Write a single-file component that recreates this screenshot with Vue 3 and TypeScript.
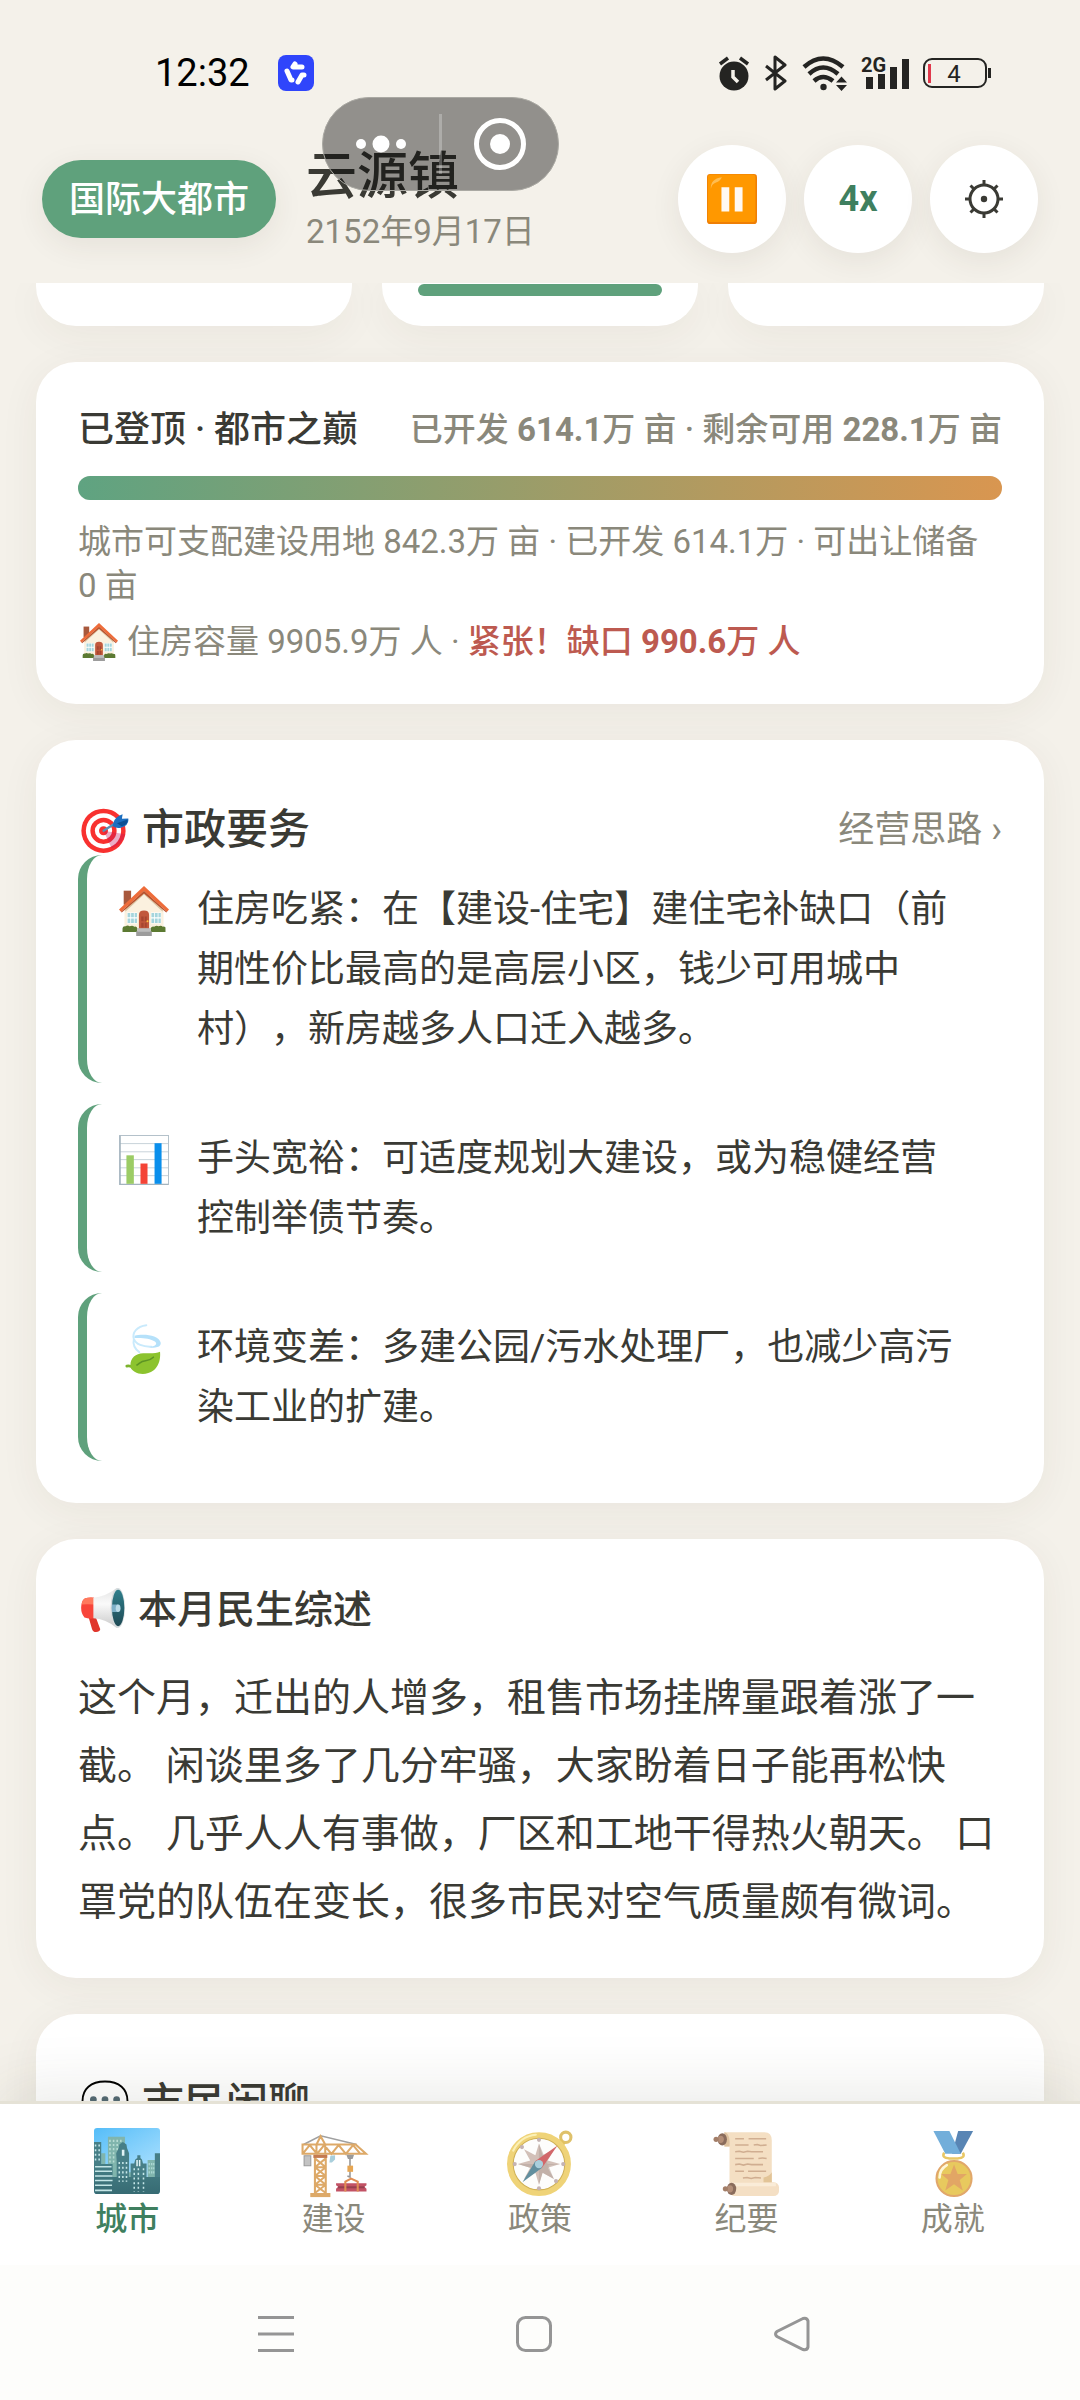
<script setup lang="ts">
import { ref } from 'vue'

interface Advice {
  icon: string
  text: string
}

interface Tab {
  id: string
  label: string
}

const advice: Advice[] = [
  { icon: 'house', text: '住房吃紧：在【建设-住宅】建住宅补缺口（前期性价比最高的是高层小区，钱少可用城中村），新房越多人口迁入越多。' },
  { icon: 'chart', text: '手头宽裕：可适度规划大建设，或为稳健经营控制举债节奏。' },
  { icon: 'leaf', text: '环境变差：多建公园/污水处理厂，也减少高污染工业的扩建。' },
]

const tabs: Tab[] = [
  { id: 'city', label: '城市' },
  { id: 'crane', label: '建设' },
  { id: 'compass', label: '政策' },
  { id: 'scroll', label: '纪要' },
  { id: 'medal', label: '成就' },
]

const activeTab = ref('city')
const developed = ref(100)
</script>

<template>
  <div class="page">
    <svg class="sprite" width="0" height="0" aria-hidden="true">
      <defs>
        <linearGradient id="sky" x1="0" y1="0" x2="0.6" y2="1">
          <stop offset="0" stop-color="#55bdf8" /><stop offset="1" stop-color="#b5e4ff" />
        </linearGradient>
        <linearGradient id="ground" x1="0" y1="0" x2="0" y2="1">
          <stop offset="0" stop-color="#457f86" /><stop offset="1" stop-color="#376b73" />
        </linearGradient>
        <linearGradient id="horn" x1="0" y1="0" x2="0" y2="1">
          <stop offset="0" stop-color="#2f7f8c" /><stop offset="1" stop-color="#1f4a55" />
        </linearGradient>
        <linearGradient id="cone" x1="0" y1="0" x2="0" y2="1">
          <stop offset="0" stop-color="#e4e4e4" /><stop offset="0.4" stop-color="#fafafa" /><stop offset="1" stop-color="#c9c9c9" />
        </linearGradient>
      </defs>

      <symbol id="house" viewBox="0 0 128 128">
        <path d="M12 12h19v36H12z" fill="#a8583c" />
        <path d="M64 10L14 58v52h100V58z" fill="#fbf1df" />
        <path d="M64 12L16 58v8l48-44 48 44v-8z" fill="#d9c4a4" />
        <path d="M64 0L0 60l5 6L64 13l59 53 5-6z" fill="#ee6c3a" />
        <path d="M5 66L64 13l59 53-2 2-57-49L7 68z" fill="#b9502c" />
        <path d="M21 68h26v28H21zM82 68h26v28H82z" fill="#fff" />
        <path d="M22 69h7v11h-7zM31 69h7v11h-7zM40 69h6v11h-6zM22 83h7v12h-7zM31 83h7v12h-7zM40 83h6v12h-6zM83 69h7v11h-7zM92 69h7v11h-7zM101 69h6v11h-6zM83 83h7v12h-7zM92 83h7v12h-7zM101 83h6v12h-6z" fill="#a5d5dc" />
        <path d="M51 110V74q0-11 13-11t13 11v36z" fill="#c1583c" />
        <path d="M57 78h6v12h-6zM66 78h5v12h-5zM57 94h6v12h-6zM66 94h5v12h-5z" fill="#a64530" />
        <circle cx="73" cy="90" r="2.500" fill="#ffc83c" />
        <path d="M9 118v-9q0-7 8-6 5-4 10 0 8-3 12 1 6-2 8 4v10zM81 118v-10q3-6 9-4 6-4 11-1 7-3 11 1 8-1 7 6v8z" fill="#5c7a32" />
        <path d="M47 108h34v8H47z" fill="#bdbdbd" /><path d="M44 116h40v12H44z" fill="#9c9c9c" />
      </symbol>

      <symbol id="chart" viewBox="0 0 128 128">
        <path d="M1 1h126v126H1z" fill="#fff" stroke="#b4c1ca" stroke-width="3" />
        <path d="M1 22h126M1 43h126M1 63h126M1 84h126M1 104h126" stroke="#b9c6cf" stroke-width="2" />
        <path d="M3 2v124h123" fill="none" stroke="#9fb0bb" stroke-width="3" />
        <path d="M19 52h19v73H19z" fill="#9ccc65" />
        <path d="M55 73h18v52H55z" fill="#f44336" />
        <path d="M91 21h18v104H91z" fill="#0a8fec" />
      </symbol>

      <symbol id="leaf" viewBox="0 0 128 128">
        <path d="M70 3C46 6 33 22 38 38c5 14 24 21 45 20M38 38c-3 14 3 26 14 34" fill="none" stroke="#c9eafc" stroke-width="5" stroke-linecap="round" />
        <path d="M40 30c12-4 36-4 50 2 20 8 22 24 8 27-8 3-16 2-20 0 14-1 22-8 14-14-12-8-32-10-52-9z" fill="#b5e1fa" />
        <path d="M20 108q8-2 16 4" fill="none" stroke="#7cb32c" stroke-width="7" stroke-linecap="round" />
        <path d="M30 112C26 90 40 76 62 75c20 0 34 1 43-4 2 20-4 38-17 48-14 10-34 12-48 3-5-3-9-6-10-10z" fill="#8cc32e" />
        <path d="M46 105c8-5 10-10 22-11 10-1 16-5 20-9" fill="none" stroke="#5d9424" stroke-width="4" stroke-linecap="round" />
      </symbol>

      <symbol id="target" viewBox="0 0 128 128">
        <circle cx="60" cy="66" r="59" fill="#f8312f" />
        <circle cx="60" cy="66" r="47" fill="#fff" />
        <circle cx="60" cy="66" r="35" fill="#f8312f" />
        <circle cx="60" cy="66" r="23" fill="#fff" />
        <circle cx="60" cy="66" r="12" fill="#f8312f" />
        <path d="M60 66l22 47q28-10 36-38z" fill="#c2185b" opacity="0.350" />
        <path d="M60 66L101 40" stroke="#5a8fb5" stroke-width="6" stroke-linecap="round" />
        <path d="M86 46q4-18 25-24l-2 12 17-1q3 18-18 24-13 4-24-4z" fill="#1c6fc0" />
        <path d="M96 46L124 36q2 14-16 18z" fill="#0d4f94" />
      </symbol>

      <symbol id="horn-speaker" viewBox="0 0 128 128">
        <path d="M22 84l20-2 14 38q-2 8-12 8-10 0-12-9z" fill="#e0352b" />
        <path d="M12 30q12-4 26-2v60q-14 3-28-2Q-2 72 1 50q2-16 11-20z" fill="#f8453a" />
        <path d="M12 30q12-4 26-2v20q-20-2-36 0 2-14 10-18z" fill="#ff7a5e" />
        <path d="M36 28Q70 26 104 0v116Q72 90 36 88z" fill="url(#cone)" />
        <ellipse cx="107" cy="58" rx="21" ry="58" fill="#d5dbdd" />
        <ellipse cx="108" cy="58" rx="18" ry="53" fill="url(#horn)" />
        <path d="M90 48h18v22H90q-2-11 0-22z" fill="#7db0c8" />
        <ellipse cx="108" cy="59" rx="7" ry="11" fill="#b9dbe8" />
      </symbol>

      <symbol id="pause" viewBox="0 0 128 128">
        <rect width="128" height="128" rx="8" fill="#ef7f05" />
        <rect x="2" y="1" width="122" height="122" rx="8" fill="#ff9800" />
        <path d="M10 38Q8 12 38 8q-4 10-15 14Q12 26 10 38z" fill="#ffbd52" />
        <path d="M37 34h20v62H37zM71 34h20v62H71z" fill="#fff9f2" />
      </symbol>

      <symbol id="bubble" viewBox="0 0 128 128">
        <path d="M64 4C26 4 4 24 4 56s22 48 52 48c2 10-8 18-16 20 26 0 40-10 46-21 24-5 38-22 38-47C124 24 102 4 64 4z" fill="#fff" stroke="#000" stroke-width="5" />
        <circle cx="33" cy="52" r="9" fill="#546a74" /><circle cx="64" cy="52" r="9" fill="#546a74" /><circle cx="95" cy="52" r="9" fill="#546a74" />
      </symbol>

      <symbol id="city" viewBox="0 0 128 128">
        <rect width="128" height="128" rx="6" fill="url(#sky)" />
        <path d="M27 17h33v80H27zM14 49h8v24h-8zM66 86h8v20h-8zM104 62h15v40h-15z" fill="#80b5ad" />
        <path d="M31 23v44M38 23v44M45 23v24M52 23v20" stroke="#b7dcd3" stroke-width="3" stroke-dasharray="4 4" />
        <path d="M107 68v24M112 68v24M116 68v24" stroke="#b9e3df" stroke-width="2" stroke-dasharray="4 4" />
        <path d="M0 27h14v50H0zM118 49h10v60h-10zM44 106V64l-1-15 5-10 1-7 7-5 7 5 1 7 4 10v57zM71 110V69h7l2-8 4-3v-5h6v5l3 3 2 8h7v41z" fill="#477f87" />
        <path d="M0 70h36v25h92v27q0 6-6 6H6q-6 0-6-6z" fill="url(#ground)" />
        <path d="M2 75h32M2 84h33M2 93h34M2 102h34M2 111h33M2 121h33" stroke="#c4e5e6" stroke-width="3" />
        <path d="M3 32v36M10 32v36" stroke="#c6e7ea" stroke-width="3" stroke-dasharray="4 5" />
        <path d="M49 66v38M56 66v38M63 66v38M78 78v46M86 78v46M96 78v46" stroke="#c6e7e8" stroke-width="3" stroke-dasharray="4 5" />
        <path d="M54 42h5v12h-5zM82 62h3v12h-3zM87 62h3v12h-3z" fill="#e1f3f5" />
      </symbol>

      <symbol id="crane" viewBox="0 -12 128 128" overflow="visible">
        <path d="M5 20L38 3l70 17" fill="none" stroke="#a0a0a0" stroke-width="3" />
        <path d="M6 42h13v19H6z" fill="#c3c3c3" stroke="#999" stroke-width="2" />
        <path d="M57 42l9-1v8l-6 6h-5z" fill="#a9cfdc" />
        <path d="M30 40V20L38 4l9 16v20M3 20h103l20 18H3zM3 38l14-17 14 17 14-17 14 17 14-17 14 17 14-17 14 17" fill="none" stroke="#dda968" stroke-width="4" />
        <path d="M27 40v75M48 40v75M27 47l21 17M48 47L27 64M27 64l21 17M48 64L27 81M27 81l21 17M48 81L27 98M27 98l21 16M48 98l-21 16M27 64h21M27 81h21M27 98h21" fill="none" stroke="#dda968" stroke-width="4" />
        <path d="M24 40h27v6H24z" fill="#c47a50" /><path d="M18 114h39v8H18z" fill="#dda968" />
        <path d="M88 40h15l-3 8h-9z" fill="#9b9b9b" /><path d="M95 46v37l-5-2" fill="none" stroke="#969696" stroke-width="3" />
        <path d="M90 61h11v12H90z" fill="#e6a653" />
        <path d="M68 95h59v4l-4 3 4 4v5H68v-5l4-4-4-3z" fill="#c25265" />
        <path d="M72 103h51" stroke="#96404f" stroke-width="4" />
        <path d="M86 111V92l11-6 13 6v19" fill="none" stroke="#e08d53" stroke-width="4" />
      </symbol>

      <symbol id="compass" viewBox="0 -4 128 128" overflow="visible">
        <circle cx="114" cy="14" r="10" fill="none" stroke="#dfc16b" stroke-width="6" />
        <path d="M96 22l8-5 9 9-5 8z" fill="#e2c25e" />
        <circle cx="62" cy="66" r="56" fill="#fdfdfc" stroke="#efd378" stroke-width="12" />
        <circle cx="62" cy="66" r="50" fill="none" stroke="#cfb055" stroke-width="2" />
        <path d="M12 40Q26 12 56 9" fill="none" stroke="#fbf0b5" stroke-width="4" stroke-linecap="round" />
        <path d="M62 26l7 23 22-12-12 22 24 7-24 7 12 22-22-12-7 23-7-23-22 12 12-22-24-7 24-7-12-22 22 12z" fill="#d2c0b8" />
        <path d="M62 26v80l7-23 22 12zM103 66H21l24 7z" fill="#b7a69e" opacity="0.600" />
        <path d="M98 30L68 73 55 60z" fill="#d2676a" /><path d="M30 101l25-41 13 13z" fill="#628f9e" />
        <circle cx="62" cy="66" r="8" fill="#a9cfdc" />
        <g fill="#c4b3b3"><circle cx="62" cy="19" r="4" /><circle cx="62" cy="113" r="4" /><circle cx="15" cy="66" r="4" /><circle cx="109" cy="66" r="4" /><circle cx="29" cy="33" r="4" /><circle cx="95" cy="99" r="4" /></g>
      </symbol>

      <symbol id="scroll" viewBox="0 -6 128 128" overflow="visible">
        <path d="M22 2h78q14 0 14 16v84H32V30H22z" fill="#f4dfc3" />
        <path d="M22 2q12 2 10 28H22z" fill="#dec19e" />
        <rect x="32" y="99" width="96" height="27" rx="10" fill="#f4dfc4" /><path d="M34 100h88v7H34z" fill="#faecd8" />
        <path d="M114 80q-4 8-16 10v9h16z" fill="#e2c497" />
        <ellipse cx="18" cy="16" rx="9" ry="12" fill="#8a6c5c" /><ellipse cx="15" cy="16" rx="6" ry="7" fill="#b38e78" /><circle cx="6" cy="16" r="5" fill="#a37e68" />
        <ellipse cx="36" cy="112" rx="9" ry="12" fill="#8a6c5c" /><ellipse cx="33" cy="112" rx="6" ry="7" fill="#b38e78" /><circle cx="24" cy="112" r="5" fill="#a37e68" />
        <path d="M43 15h17M69 15h34M43 27h26M79 27l7-1 6 2 12-1M43 40l8-1 8 2 8-2 8 1h22M43 53h36M88 53l8-1 8 1M43 65l8-1 8 2 8-2 8 1h22M43 78h17M68 78h35M58 91l8-1 8 2 8-2 11 1" fill="none" stroke="#d0ae91" stroke-width="3" />
      </symbol>

      <symbol id="medal" viewBox="0 -4 128 128" overflow="visible">
        <path d="M74 2h29L79 46H62z" fill="#5985b4" />
        <path d="M26 2h31l22 44H49z" fill="#72aeda" />
        <path d="M47 44q-6 10 10 11h16q16-1 10-11" fill="none" stroke="#e8c765" stroke-width="5" />
        <circle cx="66" cy="94" r="34" fill="#e8c95e" stroke="#e1a76b" stroke-width="4" />
        <path d="M66 67l7 18h18L77 97l6 20-17-12-17 12 6-20-14-12h18z" fill="#e2a665" />
        <path d="M38 92q0-16 14-24" fill="none" stroke="#fff6d8" stroke-width="5" stroke-linecap="round" />
      </symbol>
    </svg>

    <div class="statusbar">
      <div class="clock">
        <time>12:32</time>
        <svg class="app-badge" viewBox="0 0 36 36" aria-hidden="true">
          <rect width="36" height="36" rx="8" fill="#2f45fb" />
          <path d="M17 9l-2 3h9M9 16l4 9h1M26 20l-2 0-4 7" fill="none" stroke="#fff" stroke-width="5" stroke-linecap="round" stroke-linejoin="round" />
        </svg>
      </div>
      <div class="signals">
        <svg width="32" height="36" viewBox="0 0 32 36" aria-label="闹钟">
          <circle cx="16" cy="21" r="14.500" fill="#242422" />
          <path d="M2 9l8-6M30 9l-8-6" stroke="#242422" stroke-width="3.500" />
          <path d="M15 15v7l5 5" fill="none" stroke="#f4f1ea" stroke-width="3.500" />
        </svg>
        <svg width="24" height="36" viewBox="0 0 24 36" aria-label="蓝牙">
          <path d="M2 11l19 15-10 8V2l10 8L2 25" fill="none" stroke="#242422" stroke-width="3" stroke-linejoin="round" />
        </svg>
        <svg width="46" height="36" viewBox="0 0 46 36" aria-label="无线网络">
          <path d="M2 12q19-17 39 0M7 19q14-13 29 0M12 26q9-8 19 0" fill="none" stroke="#242422" stroke-width="4.500" />
          <circle cx="21.500" cy="32" r="3.200" fill="#242422" />
          <path d="M34 27.500l5.500-6 5.500 6zM34 30h11l-5.500 6z" fill="#242422" />
        </svg>
        <svg class="cell" width="47" height="36" viewBox="0 0 47 36" aria-label="信号">
          <text x="-1" y="17" class="net">2G</text>
          <path d="M4 22h7v12H4zM16 19h7v15h-7zM28 12h7v22h-7zM40 4h7v30h-7z" fill="#242422" />
        </svg>
        <svg width="68" height="36" viewBox="0 0 68 36" aria-label="电量">
          <rect x="1" y="4" width="62" height="28" rx="8" fill="none" stroke="#242422" stroke-width="2" />
          <path d="M5 9h3v19H5z" fill="#e0394c" /><path d="M65 13h3v10h-3z" fill="#242422" />
          <text x="31" y="27" text-anchor="middle" class="level">4</text>
        </svg>
      </div>
    </div>

    <header class="header">
      <span class="rank">国际大都市</span>
      <div class="place">
        <h1>云源镇</h1>
        <p>2152年9月17日</p>
      </div>
      <div class="controls">
        <button type="button" aria-label="暂停"><svg class="glyph-50"><use href="#pause" /></svg></button>
        <button type="button" class="speed">4x</button>
        <button type="button" aria-label="设置">
          <svg width="38" height="38" viewBox="0 0 38 38" fill="none" stroke="#3a3a34" stroke-width="3">
            <circle cx="19" cy="19" r="14" /><circle cx="19" cy="19" r="3.200" fill="#3a3a34" stroke="none" />
            <path d="M19 0v6M19 32v6M0 19h6M32 19h6M5.500 5.500l4 4M28.500 28.500l4 4M32.500 5.500l-4 4M9.500 28.500l-4 4" />
          </svg>
        </button>
      </div>
    </header>

    <div class="capsule">
      <button type="button" aria-label="更多">
        <svg width="52" height="20" viewBox="0 0 52 20" fill="#fff"><circle cx="6" cy="10" r="5" /><circle cx="26" cy="10" r="8.500" /><circle cx="46" cy="10" r="5" /></svg>
      </button>
      <i class="divider"></i>
      <button type="button" aria-label="关闭">
        <svg width="52" height="52" viewBox="0 0 52 52"><circle cx="26" cy="26" r="23.500" fill="none" stroke="#fff" stroke-width="5" /><circle cx="26" cy="26" r="10" fill="#fff" /></svg>
      </button>
    </div>

    <main class="content">
      <div class="stats">
        <div class="stat"></div>
        <div class="stat"><div class="stat-bar"></div></div>
        <div class="stat"></div>
      </div>

      <section class="card land">
        <div class="land-head">
          <h2>已登顶 · 都市之巅</h2>
          <strong>已开发 <em>614.1</em>万 亩 · 剩余可用 <em>228.1</em>万 亩</strong>
        </div>
        <div class="track"><div class="fill" :style="{ width: developed + '%' }"></div></div>
        <p class="note">城市可支配建设用地 842.3万 亩 · 已开发 614.1万 · 可出让储备 0 亩</p>
        <p class="note housing">
          <svg class="glyph-38"><use href="#house" /></svg>
          <span>住房容量 9905.9万 人 · <b>紧张！缺口 <em>990.6</em>万 人</b></span>
        </p>
      </section>

      <section class="card">
        <div class="section-head">
          <h2><svg class="glyph-48"><use href="#target" /></svg>市政要务</h2>
          <a href="#strategy">经营思路 ›</a>
        </div>
        <ul class="advice">
          <li v-for="item in advice" :key="item.icon">
            <svg class="glyph-50"><use :href="'#' + item.icon" /></svg>
            <p>{{ item.text }}</p>
          </li>
        </ul>
      </section>

      <section class="card report">
        <h2><svg class="glyph-44"><use href="#horn-speaker" /></svg>本月民生综述</h2>
        <p>这个月，迁出的人增多，租售市场挂牌量跟着涨了一截。 闲谈里多了几分牢骚，大家盼着日子能再松快点。 几乎人人有事做，厂区和工地干得热火朝天。 口罩党的队伍在变长，很多市民对空气质量颇有微词。</p>
      </section>

      <section class="card">
        <div class="section-head">
          <h2><svg class="glyph-48"><use href="#bubble" /></svg>市民闲聊</h2>
        </div>
      </section>
    </main>

    <nav class="tabs">
      <button
        v-for="tab in tabs"
        :key="tab.id"
        type="button"
        :class="{ active: tab.id === activeTab }"
        @click="activeTab = tab.id"
      >
        <svg class="glyph-66"><use :href="'#' + tab.id" /></svg>
        <span>{{ tab.label }}</span>
      </button>
    </nav>

    <div class="system-nav">
      <button type="button" aria-label="最近任务"><svg width="36" height="36" viewBox="0 0 36 36"><path d="M0 1.500h36M0 18h36M0 34.500h36" /></svg></button>
      <button type="button" aria-label="主屏幕"><svg width="36" height="36" viewBox="0 0 36 36"><rect x="1.500" y="1.500" width="33" height="33" rx="8" /></svg></button>
      <button type="button" aria-label="返回"><svg width="36" height="36" viewBox="0 0 36 36"><path d="M29 2.500L3 15.500q-3 2.500 0 5L29 33.500q4 1 5-2.500V5q-1-3.500-5-2.500z" /></svg></button>
    </div>
  </div>
</template>

<style>
body {
  margin: 0;
  background: #f4f1ea;
}
</style>

<style scoped>
.page {
  position: relative;
  display: flex;
  flex-direction: column;
  height: 100vh;
  overflow: hidden;
  background: #f4f1ea;
  color: #3a3a34;
  font-family: Roboto, "Noto Sans CJK SC", sans-serif;
  text-spacing-trim: space-all;
}
.sprite {
  position: absolute;
}
h1, h2, p, ul {
  margin: 0;
  padding: 0;
  font-weight: 500;
}
p {
  font-weight: 400;
}
em {
  font-style: normal;
  font-weight: 700;
}
button {
  display: flex;
  align-items: center;
  justify-content: center;
  border: 0;
  padding: 0;
  background: none;
  color: inherit;
  font: inherit;
}
svg {
  flex: none;
}
.glyph-38 { width: 38px; height: 38px; }
.glyph-44 { width: 44px; height: 44px; }
.glyph-48 { width: 48px; height: 48px; }
.glyph-50 { width: 50px; height: 50px; }
.glyph-66 { width: 66px; height: 66px; overflow: visible; }

.statusbar {
  display: flex;
  flex: none;
  align-items: center;
  justify-content: space-between;
  height: 145px;
  padding: 0 89px 0 155px;
}
.clock {
  display: flex;
  align-items: center;
  gap: 28px;
  color: #000;
  font-size: 38px;
}
.app-badge {
  width: 36px;
  height: 36px;
}
.signals {
  display: flex;
  align-items: center;
  gap: 14px;
}
.cell {
  overflow: visible;
}
.net {
  font-size: 20px;
  font-weight: 700;
  fill: #242422;
}
.level {
  font-size: 24px;
  fill: #242422;
}

.header {
  display: flex;
  flex: none;
  align-items: center;
  padding: 0 42px 30px;
}
.rank {
  padding: 2px 27px 0;
  border-radius: 39px;
  background: #5fa17c;
  box-shadow: 0 8px 30px rgba(60, 55, 40, 0.08);
  color: #fff;
  font-size: 36px;
  font-weight: 500;
  line-height: 76px;
}
.place {
  flex: 1;
  height: 108px;
  margin-left: 30px;
  white-space: nowrap;
}
.place h1 {
  font-size: 51px;
  line-height: 64px;
}
.place p {
  color: #8a887b;
  font-size: 33px;
  line-height: 46px;
}
.controls {
  display: flex;
  gap: 18px;
}
.controls button {
  width: 108px;
  height: 108px;
  border-radius: 50%;
  background: #fff;
  box-shadow: 0 8px 30px rgba(60, 55, 40, 0.08);
}
.controls .speed {
  color: #3f7f5f;
  font-size: 36px;
  font-weight: 700;
}

.capsule {
  position: absolute;
  top: 97px;
  left: 322px;
  display: flex;
  align-items: center;
  width: 237px;
  height: 94px;
  box-sizing: border-box;
  border: 1px solid #aaa9a3;
  border-radius: 47px;
  background: rgba(0, 0, 0, 0.4);
}
.capsule button {
  flex: 1;
}
.divider {
  width: 3px;
  height: 60px;
  background: rgba(255, 255, 255, 0.25);
}

.content {
  display: flex;
  flex: 1;
  flex-direction: column;
  gap: 36px;
  min-height: 0;
  overflow: hidden;
  padding: 0 36px;
}
.stats {
  display: flex;
  flex: none;
  gap: 30px;
}
.stat {
  flex: 1;
  height: 42px;
  padding: 1px 36px 0;
  border-radius: 0 0 40px 40px;
  background: #fff;
  box-shadow: 0 8px 40px rgba(60, 55, 40, 0.06);
}
.stat-bar {
  height: 12px;
  border-radius: 6px;
  background: #5fa17c;
}
.card {
  flex: none;
  padding: 42px;
  border-radius: 40px;
  background: #fff;
  box-shadow: 0 8px 40px rgba(60, 55, 40, 0.06);
}
.land {
  padding-bottom: 40px;
}
.land-head {
  display: flex;
  align-items: center;
  justify-content: space-between;
  line-height: 52px;
  white-space: nowrap;
}
.land-head h2 {
  font-size: 36px;
}
.land-head strong {
  color: #8a887b;
  font-size: 33px;
  font-weight: 500;
}
.track {
  height: 24px;
  margin: 20px 0;
  border-radius: 12px;
  background: #eeebe2;
}
.fill {
  height: 100%;
  border-radius: 12px;
  background: linear-gradient(90deg, #5fa381, #d99650);
}
.note {
  color: #8a887b;
  font-size: 33px;
  line-height: 44px;
}
.housing {
  display: flex;
  align-items: center;
  gap: 9px;
  margin-top: 12px;
  padding-left: 2px;
}
.housing b {
  color: #bd5a50;
  font-weight: 500;
}
.section-head {
  display: flex;
  align-items: center;
  justify-content: space-between;
  padding-top: 23px;
  line-height: 50px;
}
.section-head h2,
.report h2 {
  display: flex;
  align-items: center;
  gap: 13px;
  padding-left: 3px;
}
.section-head h2 {
  font-size: 42px;
}
.section-head a {
  color: #8a887b;
  font-size: 36px;
  text-decoration: none;
}
.advice {
  display: flex;
  flex-direction: column;
  gap: 21px;
  list-style: none;
}
.advice li {
  display: flex;
  align-items: flex-start;
  gap: 28px;
  padding: 25px 32px 23px;
  border-left: 9px solid #5fa17c;
  border-radius: 24px;
  font-size: 37px;
  line-height: 60px;
}
.advice svg {
  margin-top: 6px;
}
.report h2 {
  font-size: 39px;
  line-height: 58px;
}
.report p {
  margin-top: 25px;
  font-size: 39px;
  line-height: 68px;
}

.tabs {
  position: relative;
  display: flex;
  flex: none;
  height: 161px;
  padding: 0 24px;
  border-top: 3px solid #e5e2d6;
  background: #fff;
  box-shadow: 0 -12px 60px rgba(60, 55, 40, 0.1);
}
.tabs button {
  flex: 1;
  flex-direction: column;
  justify-content: flex-start;
  gap: 3px;
  padding-top: 24px;
  color: #8a887b;
  font-size: 32px;
  line-height: 44px;
}
.tabs .active {
  color: #3f7f5f;
  font-weight: 500;
}
.system-nav {
  position: relative;
  display: flex;
  flex: none;
  justify-content: center;
  gap: 222px;
  height: 133px;
  padding: 2px 12px 0 0;
  background: #fdfdfb;
  fill: none;
  stroke: #959595;
  stroke-width: 3px;
}
</style>
